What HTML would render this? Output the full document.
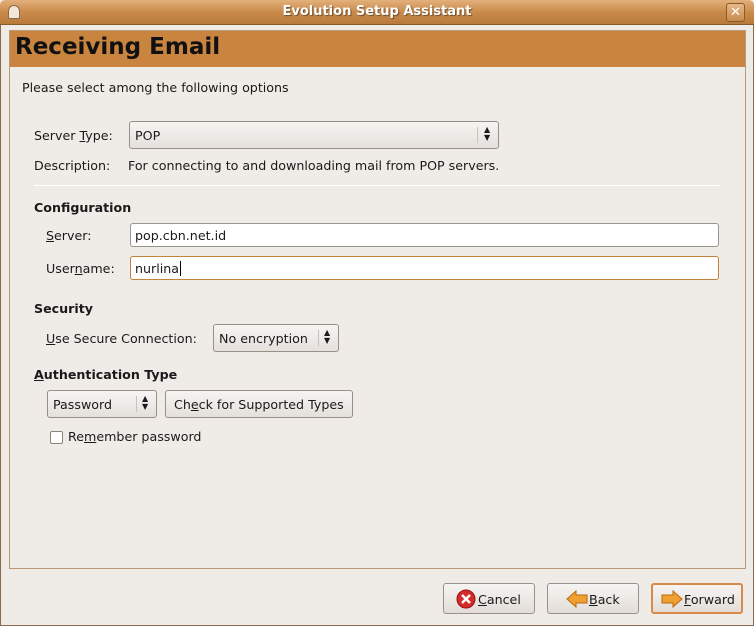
<!DOCTYPE html><html><head><style>
*{box-sizing:border-box;margin:0;padding:0}
body{width:754px;height:626px;background:#efebe7;font-family:"DejaVu Sans",sans-serif;font-size:12.65px;color:#1a1a1a;position:relative;overflow:hidden}
.a{position:absolute;white-space:nowrap}
.tb{left:0;top:0;width:754px;height:25px;background:linear-gradient(#e3b07b,#c98b4c 50%,#b97a3c);border-bottom:1px solid #8a5a2a;border-radius:5px 5px 0 0}
.frame{left:0;top:25px;width:754px;height:601px;border:1px solid #8a6a4a;border-top:none}
.panel{left:9px;top:30px;width:737px;height:539px;border:1px solid #b89a7a;background:#efebe7}
.hdr{left:10px;top:31px;width:735px;height:36px;background:#c9843f}
.combo{border:1px solid #9a8f86;border-radius:3px;background:linear-gradient(#f6f4f2,#e4e0dc);height:28px}
.entry{border:1px solid #9a9590;border-radius:3px;background:#fff;height:24px;padding:4px 0 0 4px}
.btn{border:1px solid #9a928a;border-radius:3px;background:linear-gradient(#f6f4f2,#e2ddd8);height:31px}
.arr{position:absolute;top:5px;width:1px;height:16px;background:#c8c2bb}
u{text-decoration:underline}
</style></head><body>
<div class="a frame"></div>
<div class="a tb"></div>
<div class="a" style="left:8px;top:5px;width:12px;height:14px;border-radius:6px 6px 2px 2px;background:#f3e7d8;border:1px solid #8a6a4a"></div>
<div class="a" style="left:0;width:754px;top:4px;text-align:center;color:#fff;font-weight:bold;font-size:13px;text-shadow:1px 1px 1px #6a4a2a">Evolution Setup Assistant</div>
<div class="a" style="left:726px;top:3px;width:19px;height:19px;border:1px solid #8a5a2a;border-radius:3px;background:linear-gradient(#e8b888,#c88a4c);color:#fff;font-weight:bold;text-align:center;line-height:17px;font-size:13px">✕</div>
<div class="a panel"></div>
<div class="a hdr"></div>
<div class="a" style="left:15px;top:34px;font-size:23px;font-weight:bold;color:#111">Receiving Email</div>
<div class="a" style="left:22px;top:80px">Please select among the following options</div>
<div class="a" style="left:34px;top:128px">Server <u>T</u>ype:</div>
<div class="a combo" style="left:129px;top:121px;width:370px"><span class="a" style="left:5px;top:6px">POP</span><div class="arr" style="left:347px"></div><span class="a" style="left:354px;top:4px;font-size:8px;line-height:8px">▲<br>▼</span></div>
<div class="a" style="left:34px;top:158px">Description:</div>
<div class="a" style="left:128px;top:158px">For connecting to and downloading mail from POP servers.</div>
<div class="a" style="left:34px;top:185px;width:686px;height:1px;background:#cfc8c1;border-bottom:1px solid #fff"></div>
<div class="a" style="left:34px;top:200px;font-weight:bold">Configuration</div>
<div class="a" style="left:46px;top:228px"><u>S</u>erver:</div>
<div class="a entry" style="left:130px;top:223px;width:589px">pop.cbn.net.id</div>
<div class="a" style="left:46px;top:261px">User<u>n</u>ame:</div>
<div class="a entry" style="left:130px;top:256px;width:589px;border-color:#c8803f">nurlina<span style="border-left:1px solid #000;margin-left:1px"></span></div>
<div class="a" style="left:34px;top:301px;font-weight:bold">Security</div>
<div class="a" style="left:46px;top:331px"><u>U</u>se Secure Connection:</div>
<div class="a combo" style="left:213px;top:324px;width:126px"><span class="a" style="left:5px;top:6px">No encryption</span><div class="arr" style="left:104px"></div><span class="a" style="left:110px;top:4px;font-size:8px;line-height:8px">▲<br>▼</span></div>
<div class="a" style="left:34px;top:367px;font-weight:bold"><u>A</u>uthentication Type</div>
<div class="a combo" style="left:47px;top:390px;width:110px"><span class="a" style="left:5px;top:6px">Password</span><div class="arr" style="left:88px"></div><span class="a" style="left:94px;top:4px;font-size:8px;line-height:8px">▲<br>▼</span></div>
<div class="a combo" style="left:165px;top:390px;width:188px"><span class="a" style="left:8px;top:6px">Ch<u>e</u>ck for Supported Types</span></div>
<div class="a" style="left:50px;top:431px;width:13px;height:13px;border:1px solid #8a847e;border-radius:2px;background:#fff"></div>
<div class="a" style="left:68px;top:429px">Re<u>m</u>ember password</div>
<div class="a btn" style="left:443px;top:583px;width:92px"><svg class="a" style="left:12px;top:5px" width="20" height="20" viewBox="0 0 20 20"><circle cx="10" cy="10" r="9" fill="#d42a2a" stroke="#9a1010"/><path d="M6 6L14 14M14 6L6 14" stroke="#fff" stroke-width="2.5"/></svg><span class="a" style="left:34px;top:8px"><u>C</u>ancel</span></div>
<div class="a btn" style="left:547px;top:583px;width:92px"><svg class="a" style="left:18px;top:6px" width="22" height="18" viewBox="0 0 22 18"><path d="M1 9L10 1V5H21V13H10V17Z" fill="#f0a030" stroke="#b86a10"/></svg><span class="a" style="left:41px;top:8px"><u>B</u>ack</span></div>
<div class="a btn" style="left:651px;top:583px;width:92px;border:2px solid #d88a4a"><svg class="a" style="left:8px;top:5px" width="22" height="18" viewBox="0 0 22 18"><path d="M21 9L12 1V5H1V13H12V17Z" fill="#f0a030" stroke="#b86a10"/></svg><span class="a" style="left:31px;top:7px"><u>F</u>orward</span></div>
</body></html>
